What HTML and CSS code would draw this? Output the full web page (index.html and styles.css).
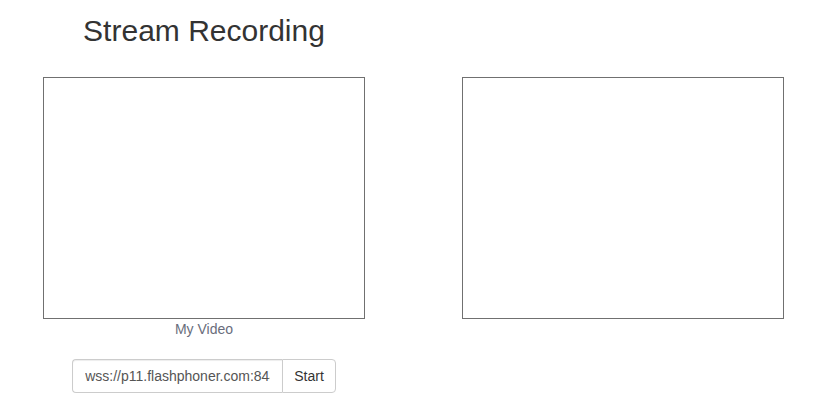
FILE: index.html
```html
<!DOCTYPE html>
<html>
<head>
<meta charset="utf-8">
<link rel="stylesheet" href="styles.css">
</head>
<body>
<div class="page">
  <div class="col">
    <h2 class="title">Stream Recording</h2>
    <div class="video"></div>
    <div class="caption">My Video</div>
    <div class="input-group">
      <input class="url" type="text" value="wss://p11.flashphoner.com:8443">
      <button class="btn" type="button">Start</button>
    </div>
  </div>
  <div class="col col-right">
    <div class="video"></div>
  </div>
</div>
</body>
</html>
```
FILE: styles.css
```css
html, body {
  margin: 0;
  padding: 0;
  background: #fff;
  font-family: "Liberation Sans", Arial, sans-serif;
  font-size: 14px;
  line-height: 20px;
  color: #333;
}
.page {
  display: flex;
  gap: 97px;
  padding-left: 43px;
}
.col {
  width: 322px;
  display: flex;
  flex-direction: column;
  align-items: center;
}
.col-right {
  padding-top: 77px;
}
.title {
  margin: 14px 0 30px;
  font-size: 30px;
  line-height: 33px;
  font-weight: 500;
  color: #333;
}
.video {
  width: 320px;
  height: 240px;
  border: 1px solid #707070;
  background: #fff;
}
.caption {
  margin-top: 0;
  color: #696d7c;
  font-size: 14px;
  line-height: 20px;
}
.input-group {
  display: flex;
  margin-top: 20px;
  height: 34px;
}
.url {
  box-sizing: border-box;
  width: 210px;
  height: 34px;
  padding: 6px 12px;
  border: 1px solid #ccc;
  border-right: none;
  border-radius: 4px 0 0 4px;
  font-family: "Liberation Sans", Arial, sans-serif;
  font-size: 14px;
  color: #555;
  background: #fff;
  outline: none;
  margin: 0;
  box-shadow: inset 0 1px 1px rgba(0,0,0,0.075);
}
.btn {
  box-sizing: border-box;
  height: 34px;
  padding: 6px 11px;
  border: 1px solid #ccc;
  border-radius: 0 4px 4px 0;
  background: #fff;
  color: #333;
  font-family: "Liberation Sans", Arial, sans-serif;
  font-size: 14px;
  line-height: 20px;
  margin: 0;
}
```
